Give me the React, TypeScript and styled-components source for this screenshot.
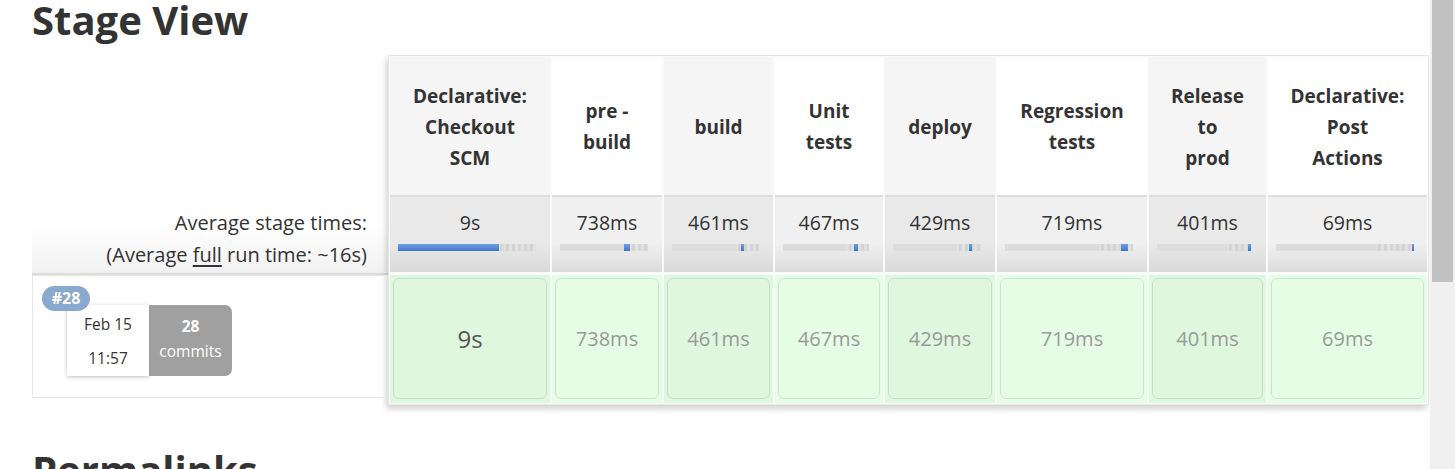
import React from "react";
import styled, { createGlobalStyle } from "styled-components";

const GlobalStyle = createGlobalStyle`
  html, body {
    margin: 0;
    padding: 0;
    background: #fff;
    overflow: hidden;
  }
  body {
    font-family: "Open Sans", "Noto Sans", "DejaVu Sans", sans-serif;
    color: #333;
  }
`;

type Stage = {
  lines: string[];
  label: string;
  ms: number;
  width: number;
};

const stages: Stage[] = [
  { lines: ["Declarative:", "Checkout", "SCM"], label: "9s", ms: 9000, width: 160 },
  { lines: ["pre -", "build"], label: "738ms", ms: 738, width: 110 },
  { lines: ["build"], label: "461ms", ms: 461, width: 109 },
  { lines: ["Unit", "tests"], label: "467ms", ms: 467, width: 108 },
  { lines: ["deploy"], label: "429ms", ms: 429, width: 110 },
  { lines: ["Regression", "tests"], label: "719ms", ms: 719, width: 150 },
  { lines: ["Release", "to", "prod"], label: "401ms", ms: 401, width: 117 },
  { lines: ["Declarative:", "Post", "Actions"], label: "69ms", ms: 69, width: 159 },
];

const totalMs = stages.reduce((s, x) => s + x.ms, 0);
const firstShare = (stages[0].ms / totalMs) * 100;

const Viewport = styled.div`
  display: flex;
  width: 1455px;
  height: 469px;
  overflow: hidden;
`;

const Page = styled.main`
  flex: 1;
  min-width: 0;
  padding-left: 32px;
  overflow: hidden;
`;

const Heading = styled.h1`
  margin: 0;
  font-size: 40px;
  line-height: 40px;
  font-weight: 700;
  color: #333;
`;

const PermaHeading = styled(Heading)`
  margin-top: 45px;
`;

const StageSection = styled.section`
  display: flex;
  align-items: flex-start;
  margin-top: 15px;
`;

const HistoryColumn = styled.div`
  width: 356px;
  flex-shrink: 0;
  display: flex;
  flex-direction: column;
`;

const HeaderSpacer = styled.div`
  height: 140px;
`;

const AverageLabel = styled.div`
  height: 66px;
  padding: 12px 21px 0 0;
  text-align: right;
  font-size: 20px;
  line-height: 32px;
  color: #333;
  background: linear-gradient(to bottom, #ffffff 0%, #ffffff 40%, #f1f1f1 100%);
  border-bottom: 2px solid #dcdcdc;
`;

const Underlined = styled.span`
  text-decoration: underline;
  text-underline-offset: 3px;
`;

const HistoryCell = styled.div`
  position: relative;
  height: 92px;
  padding: 29px 0 0 34px;
  border: 1px solid #e6e6e6;
  border-right: none;
  display: flex;
  align-items: flex-start;
`;

const BuildBadge = styled.span`
  position: absolute;
  top: 10px;
  left: 9px;
  width: 48px;
  height: 25px;
  border-radius: 13px;
  background: #8aa9cf;
  color: #fff;
  font-weight: 700;
  font-size: 16px;
  line-height: 25px;
  text-align: center;
  z-index: 1;
`;

const DateBox = styled.div`
  width: 82px;
  height: 69px;
  padding-top: 2px;
  background: #fff;
  box-shadow: 0 1px 4px rgba(0, 0, 0, 0.25);
  text-align: center;
  font-size: 15.5px;
  line-height: 34px;
  color: #333;
`;

const CommitsBox = styled.div`
  width: 83px;
  height: 62px;
  padding-top: 9px;
  background: #a0a0a0;
  border-radius: 0 7px 7px 0;
  text-align: center;
  color: #fff;
  font-size: 15.5px;
  line-height: 25px;
`;

const CommitCount = styled.div`
  font-weight: 700;
`;

const StageTable = styled.div<{ $cols: string }>`
  display: grid;
  grid-template-columns: ${(p) => p.$cols};
  grid-template-rows: 138px 80px 128px;
  column-gap: 2px;
  padding: 1px;
  border: 1px solid #e6e6e6;
  background: #fafafa;
  box-shadow: -2px 4px 6px rgba(0, 0, 0, 0.18);
`;

const HeaderCell = styled.div<{ $odd: boolean }>`
  display: flex;
  align-items: center;
  justify-content: center;
  text-align: center;
  padding: 2px 6px 0;
  background: ${(p) => (p.$odd ? "#f5f5f5" : "#ffffff")};
  font-size: 19px;
  font-weight: 700;
  line-height: 31px;
  color: #333;
`;

const AvgCell = styled.div<{ $odd: boolean }>`
  margin-bottom: 3px;
  border-top: 2px solid #dedede;
  padding-top: 12px;
  background: ${(p) =>
    p.$odd
      ? "linear-gradient(to bottom, #e9e9e9 0%, #e9e9e9 62%, #d9d9d9 100%)"
      : "linear-gradient(to bottom, #f0f0f0 0%, #f0f0f0 62%, #dcdcdc 100%)"};
  text-align: center;
`;

const AvgValue = styled.div`
  font-size: 19.5px;
  line-height: 28px;
  color: #333;
`;

const TimeBar = styled.div`
  position: relative;
  height: 7px;
  margin: 7px 14px 0 8px;
  background:
    linear-gradient(to right, #dcdcdc ${firstShare}%, transparent ${firstShare}%),
    repeating-linear-gradient(90deg, #d4d4d4 0 3px, #e0e0e0 3px 6px);
`;

const TimeFill = styled.div`
  position: absolute;
  top: 0;
  bottom: 0;
  min-width: 2px;
  background: linear-gradient(to bottom, #6c9de2 0%, #5088d6 60%, #3f72c2 100%);
`;

const RunCell = styled.div<{ $odd: boolean }>`
  display: flex;
  padding: 3px 3px 4px 3px;
  background: ${(p) => (p.$odd ? "#dff7df" : "#e5fde5")};
`;

const RunBox = styled.div<{ $long: boolean }>`
  flex: 1;
  display: flex;
  align-items: center;
  justify-content: center;
  border: 1px solid rgba(0, 0, 0, 0.1);
  border-radius: 6px;
  font-size: ${(p) => (p.$long ? "24px" : "20px")};
  color: ${(p) => (p.$long ? "#555" : "#999")};
`;

const ScrollTrack = styled.div`
  width: 25px;
  height: 469px;
  flex-shrink: 0;
  background: #f0f0f0;
  padding: 0 2px 0 2px;
  box-sizing: border-box;
`;

const ScrollThumb = styled.div`
  height: 282px;
  background: #c1c1c1;
`;

export default function App() {
  const cols = stages.map((s) => `${s.width}px`).join(" ");
  let acc = 0;
  const spans = stages.map((s) => {
    const left = (acc / totalMs) * 100;
    acc += s.ms;
    return { left, width: (s.ms / totalMs) * 100 };
  });

  return (
    <>
      <GlobalStyle />
      <Viewport>
        <Page>
          <Heading>Stage View</Heading>
          <StageSection>
            <HistoryColumn>
              <HeaderSpacer />
              <AverageLabel>
                Average stage times:
                <br />
                (Average <Underlined>full</Underlined> run time: ~16s)
              </AverageLabel>
              <HistoryCell>
                <BuildBadge>#28</BuildBadge>
                <DateBox>
                  Feb 15
                  <br />
                  11:57
                </DateBox>
                <CommitsBox>
                  <CommitCount>28</CommitCount>
                  commits
                </CommitsBox>
              </HistoryCell>
            </HistoryColumn>
            <StageTable $cols={cols}>
              {stages.map((s, i) => (
                <HeaderCell key={`h${i}`} $odd={i % 2 === 0}>
                  <div>
                    {s.lines.map((l, j) => (
                      <div key={j}>{l}</div>
                    ))}
                  </div>
                </HeaderCell>
              ))}
              {stages.map((s, i) => (
                <AvgCell key={`a${i}`} $odd={i % 2 === 0}>
                  <AvgValue>{s.label}</AvgValue>
                  <TimeBar>
                    <TimeFill
                      style={{ left: `${spans[i].left}%`, width: `${spans[i].width}%` }}
                    />
                  </TimeBar>
                </AvgCell>
              ))}
              {stages.map((s, i) => (
                <RunCell key={`r${i}`} $odd={i % 2 === 0}>
                  <RunBox $long={s.ms > 5000}>{s.label}</RunBox>
                </RunCell>
              ))}
            </StageTable>
          </StageSection>
          <PermaHeading>Permalinks</PermaHeading>
        </Page>
        <ScrollTrack>
          <ScrollThumb />
        </ScrollTrack>
      </Viewport>
    </>
  );
}
